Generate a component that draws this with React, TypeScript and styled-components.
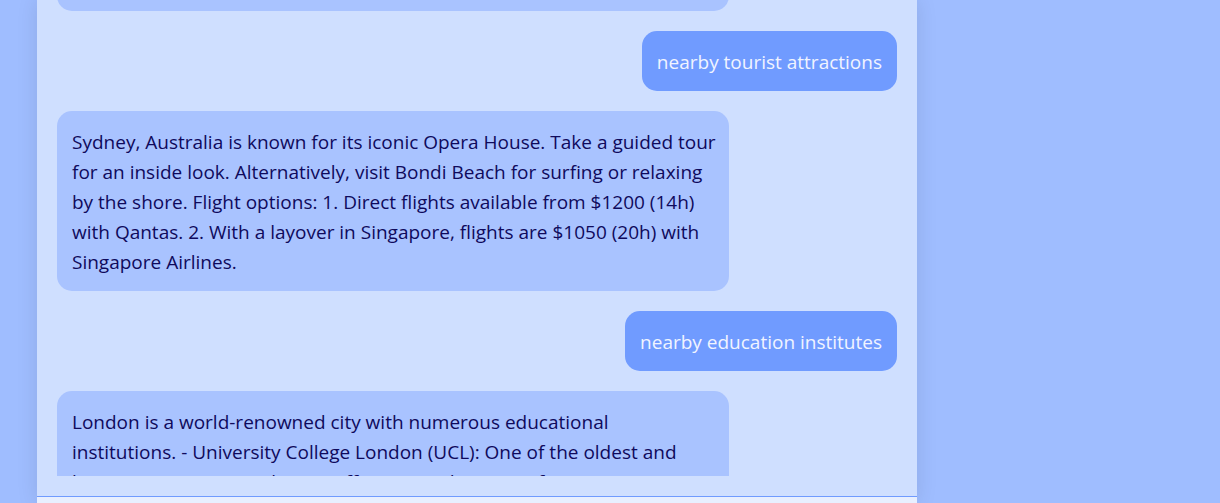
import React from "react";
import styled, { createGlobalStyle } from "styled-components";

const GlobalStyle = createGlobalStyle`
  *, *::before, *::after { box-sizing: border-box; }
  body {
    margin: 0;
    background: #9fbdff;
    font-family: "Segoe UI", "Open Sans", "Noto Sans", sans-serif;
  }
`;

const Page = styled.div`
  height: 100vh;
  padding: 0 303px 0 37px;
  overflow: hidden;
`;

const ChatPanel = styled.main`
  display: flex;
  flex-direction: column;
  height: 100%;
  background: #cfdfff;
  box-shadow: 0 0 20px rgba(0, 0, 0, 0.1);
`;

const Viewport = styled.section`
  flex: 1;
  min-height: 0;
  margin: 0 20px 20px;
  overflow: hidden;
`;

const MessageList = styled.div`
  display: flex;
  flex-direction: column;
  gap: 20px;
  margin-top: -49px;
`;

const Bubble = styled.p<{ $user?: boolean }>`
  align-self: ${(p) => (p.$user ? "flex-end" : "flex-start")};
  width: ${(p) => (p.$user ? "auto" : "80%")};
  max-width: 80%;
  min-height: 60px;
  margin: 0;
  padding: ${(p) => (p.$user ? "16px 15px 14px" : "16px 10px 14px 15px")};
  border-radius: 15px;
  background: ${(p) => (p.$user ? "#709bff" : "#a9c3ff")};
  color: ${(p) => (p.$user ? "#f0f4ff" : "#0f0a5c")};
  font-size: 19px;
  line-height: 30px;
`;

const Footer = styled.footer`
  height: 7px;
  border-top: 1px solid #709bff;
  background: #e8efff;
`;

export default function App() {
  return (
    <>
      <GlobalStyle />
      <Page>
        <ChatPanel>
          <Viewport>
            <MessageList>
              <Bubble />
              <Bubble $user>nearby tourist attractions</Bubble>
              <Bubble>
                Sydney, Australia is known for its iconic Opera House. Take a guided tour for an inside look. Alternatively, visit Bondi Beach for surfing or relaxing by the shore. Flight options: 1. Direct flights available from $1200 (14h) with Qantas. 2. With a layover in Singapore, flights are $1050 (20h) with Singapore Airlines.
              </Bubble>
              <Bubble $user>nearby education institutes</Bubble>
              <Bubble>
                London is a world-renowned city with numerous educational
                <br />
                institutions. - University College London (UCL): One of the oldest and largest universities in the UK, offering a wide range of courses. - King's
              </Bubble>
            </MessageList>
          </Viewport>
          <Footer />
        </ChatPanel>
      </Page>
    </>
  );
}
